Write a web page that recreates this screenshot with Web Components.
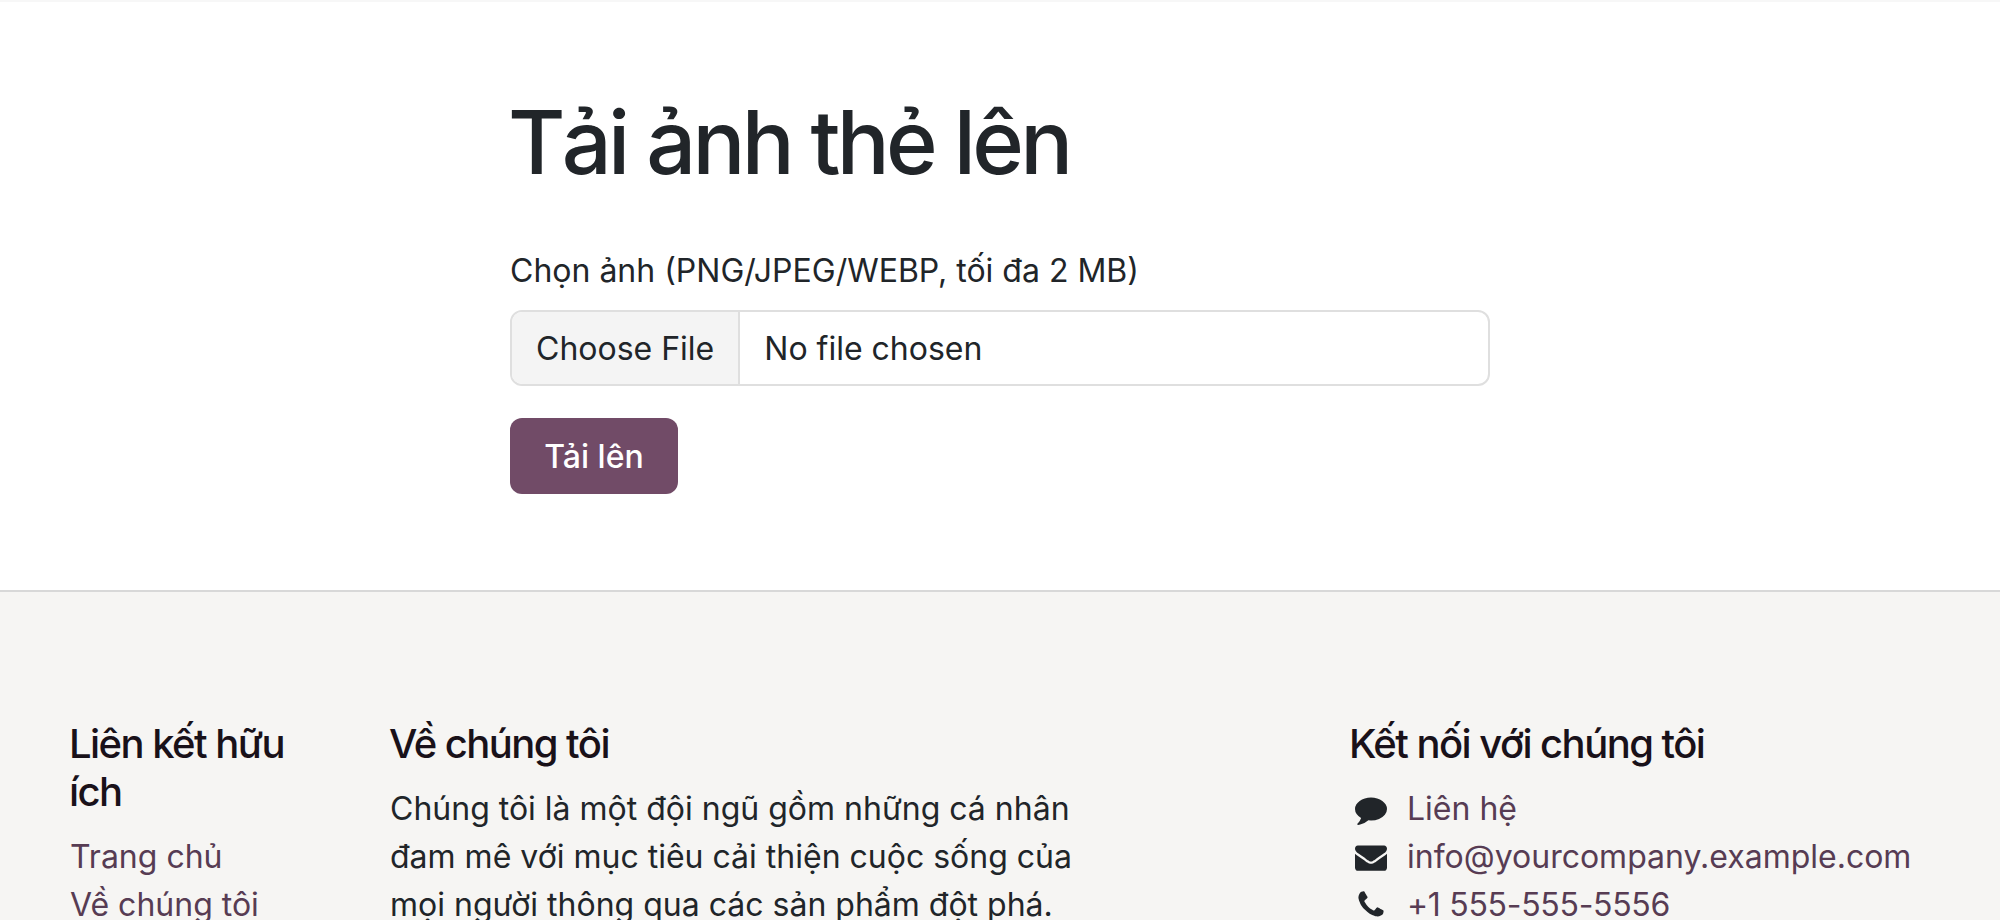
<!DOCTYPE html>
<html lang="vi">
<head>
<meta charset="utf-8">
<title>Tải ảnh thẻ lên</title>
<style>
  html, body { margin: 0; height: 920px; overflow: hidden; background: #fff; }
  body { font: 32px/48px Inter, "Noto Sans", sans-serif; color: #212529; }
</style>
</head>
<body>
<upload-section>
  <upload-form></upload-form>
</upload-section>
<site-footer>
  <footer-col heading="Liên kết hữu ích">
    <footer-link>Trang chủ</footer-link>
    <footer-link>Về chúng tôi</footer-link>
  </footer-col>
  <footer-col heading="Về chúng tôi">
    Chúng tôi là một đội ngũ gồm những cá nhân đam mê với mục tiêu cải thiện cuộc sống của mọi người thông qua các sản phẩm đột phá.
  </footer-col>
  <footer-col heading="Kết nối với chúng tôi">
    <contact-row icon="comment">Liên hệ</contact-row>
    <contact-row icon="envelope">info@yourcompany.example.com</contact-row>
    <contact-row icon="phone">+1 555-555-5556</contact-row>
  </footer-col>
</site-footer>
<script>
class UploadSection extends HTMLElement {
  constructor() {
    super();
    this.attachShadow({ mode: 'open' });
    this.shadowRoot.innerHTML = `
      <style>
        :host { display: block; height: 590px; box-sizing: border-box; border-top: 2px solid #f7f7f7; padding: 87px 510px 0; }
        h1 { margin: 0 0 52px -2px; font-size: 88px; line-height: 106px; font-weight: 500; letter-spacing: -3.72px; font-kerning: none; color: #212529; }
      </style>
      <h1>Tải ảnh thẻ lên</h1>
      <slot></slot>
    `;
  }
}

class UploadForm extends HTMLElement {
  constructor() {
    super();
    this.attachShadow({ mode: 'open' });
    this.shadowRoot.innerHTML = `
      <style>
        :host { display: block; width: 980px; }
        label { display: block; margin-bottom: 15px; }
        .file { display: flex; height: 76px; box-sizing: border-box; border: 2px solid #dfdfdf; border-radius: 12px; overflow: hidden; margin-bottom: 32px; background: #fff; }
        .pick { display: flex; align-items: center; padding: 1px 24px 0; background: #f4f4f4; border-right: 2px solid #dfdfdf; }
        .name { display: flex; align-items: center; padding: 1px 24px 0; }
        button { display: block; height: 76px; width: 168px; padding: 1px 0 0; border: 0; border-radius: 12px; background: #714b67; color: #fff; font: inherit; font-weight: 500; }
      </style>
      <label>Chọn ảnh (PNG/JPEG/WEBP, tối đa 2 MB)</label>
      <div class="file"><span class="pick">Choose File</span><span class="name">No file chosen</span></div>
      <button type="button">Tải lên</button>
    `;
  }
}

class SiteFooter extends HTMLElement {
  constructor() {
    super();
    this.attachShadow({ mode: 'open' });
    this.shadowRoot.innerHTML = `
      <style>
        :host { display: grid; grid-template-columns: 320px 800px 640px; column-gap: 0; justify-content: start; box-sizing: border-box; height: 330px; padding: 128px 40px 0; background: #f6f5f3; border-top: 2px solid #d8d8d8; overflow: hidden; }
        ::slotted(footer-col:last-child) { margin-left: 160px; }
      </style>
      <slot></slot>
    `;
  }
}

class FooterCol extends HTMLElement {
  constructor() {
    super();
    this.attachShadow({ mode: 'open' });
    this.shadowRoot.innerHTML = `
      <style>
        :host { display: block; padding: 0 30px; }
        h5 { margin: 0 0 17px -1px; font-size: 40px; line-height: 48px; font-weight: 500; letter-spacing: -1.55px; color: #191119; }
      </style>
      <h5></h5>
      <slot></slot>
    `;
    this.shadowRoot.querySelector('h5').textContent = this.getAttribute('heading');
  }
}

class FooterLink extends HTMLElement {
  constructor() {
    super();
    this.attachShadow({ mode: 'open' });
    this.shadowRoot.innerHTML = `
      <style>
        :host { display: block; color: #573c53; }
      </style>
      <slot></slot>
    `;
  }
}

const ICONS = {
  comment: 'M1792 896q0 174-120 321.5t-326 233-450 85.5q-70 0-145-8-198 175-460 242-49 14-114 22h-5q-15 0-27-10.5t-16-27.5v-1q-3-4-.5-12t2-10 4.5-9.5l6-9 7-8.5 8-9q7-8 31-34.5t34.5-38 31-39.5 32.5-51 27-59 26-76q-157-89-247.5-220t-90.5-281q0-130 71-248.5t191-204.5 286-136.5 348-50.5 348 50.5 286 136.5 191 204.5 71 248.5z',
  envelope: 'M1792 710v794q0 66-47 113t-113 47h-1472q-66 0-113-47t-47-113v-794q44 49 101 87 362 246 497 345 57 42 92.5 65.5t94.5 48 110 24.5h2q51 0 110-24.5t94.5-48 92.5-65.5q170-123 498-345 57-39 100-87zm0-294q0 79-49 151t-122 123q-376 261-468 325-10 7-42.5 30.5t-54 38-52 32.5-57.5 27-50 9h-2q-23 0-50-9t-57.5-27-52-32.5-54-38-42.5-30.5q-91-64-262-182.5t-205-142.5q-62-42-117-115.5t-55-136.5q0-78 41.5-130t118.5-52h1472q65 0 112.5 47t47.5 113z',
  phone: 'M1600 1240q0 27-10 70.5t-21 68.5q-21 50-122 106-94 51-186 51-27 0-53-3.5t-57.5-12.5-47-14.5-55.5-20.5-49-18q-98-35-175-83-127-79-264-216t-216-264q-48-77-83-175-3-9-18-49t-20.5-55.5-14.5-47-12.5-57.5-3.5-53q0-92 51-186 56-101 106-122 25-11 68.5-21t70.5-10q14 0 21 3 18 6 53 76 11 19 30 54t35 63.5 31 53.5q3 4 17.5 25t21.5 35.5 7 28.5q0 20-28.5 50t-62 55-62 53-28.5 46q0 9 5 22.5t8.5 20.5 14 24 11.5 19q76 137 174 235t235 174q2 1 19 11.5t24 14 20.5 8.5 22.5 5q18 0 46-28.5t53-62 55-62 50-28.5q14 0 28.5 7t35.5 21.5 25 17.5q25 15 53.5 31t63.5 35 54 30q70 35 76 53 3 7 3 21z'
};

class ContactRow extends HTMLElement {
  constructor() {
    super();
    this.attachShadow({ mode: 'open' });
    this.shadowRoot.innerHTML = `
      <style>
        :host { display: flex; align-items: center; color: #573c53; white-space: nowrap; }
        :host([icon="phone"]) { letter-spacing: -0.3px; }
        .ico { flex: none; width: 41px; margin-right: 16px; display: flex; justify-content: center; }
        svg { width: 32px; height: 32px; fill: #212529; display: block; }
      </style>
      <span class="ico"><svg viewBox="0 0 1792 1792"><path d="${ICONS[this.getAttribute('icon')]}"/></svg></span>
      <slot></slot>
    `;
  }
}

customElements.define('upload-section', UploadSection);
customElements.define('upload-form', UploadForm);
customElements.define('site-footer', SiteFooter);
customElements.define('footer-col', FooterCol);
customElements.define('footer-link', FooterLink);
customElements.define('contact-row', ContactRow);
</script>
</body>
</html>
